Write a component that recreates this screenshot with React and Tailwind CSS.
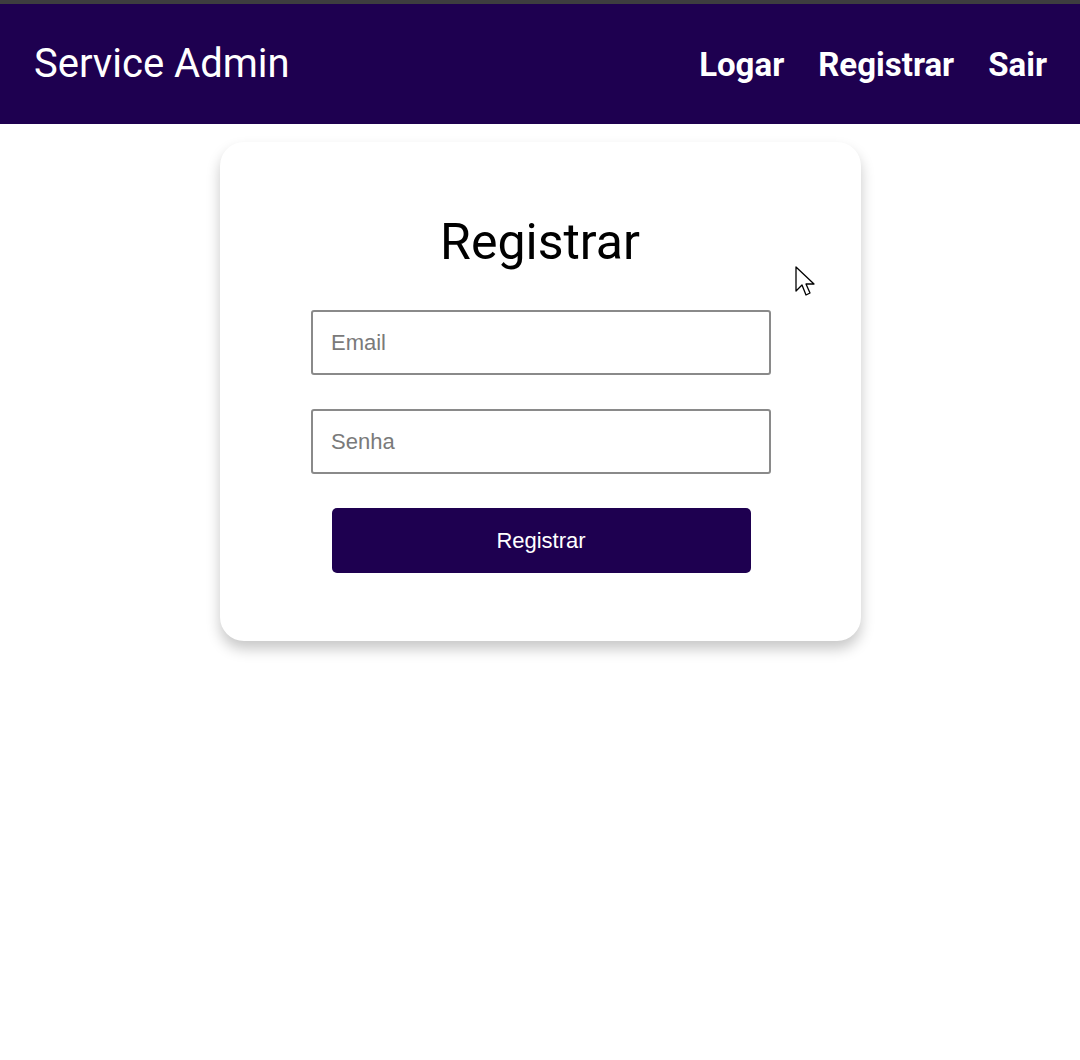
import React, { useState } from 'react';

const Navbar = () => {
  return (
    <div>
      <div className="h-[4px] bg-[#3d3d3f]" />
      <nav className="flex items-center justify-between h-[120px] bg-[#1e0050] pl-[34px] pr-[33px] font-['Roboto',sans-serif] text-white">
        <span className="text-[40px] leading-none">Service Admin</span>
        <div className="flex items-center gap-[34px] text-[33px] font-bold leading-none">
          <a href="#">Logar</a>
          <a href="#">Registrar</a>
          <a href="#">Sair</a>
        </div>
      </nav>
    </div>
  );
};

const Register = () => {
  const [email, setEmail] = useState('');
  const [senha, setSenha] = useState('');

  return (
    <div className="relative mx-auto mt-[18px] w-[641px] rounded-[24px] bg-white pt-[70px] pb-[68px] shadow-[0_8px_14px_rgba(0,0,0,0.22)]">
      <h1 className="text-center font-['Roboto',sans-serif] text-[50px] leading-[60px] text-black">Registrar</h1>
      <form className="mt-[38px] flex flex-col items-center pl-[2px] font-['Liberation_Sans',Arial,sans-serif]" onSubmit={(e) => e.preventDefault()}>
        <input
          type="email"
          placeholder="Email"
          value={email}
          onChange={(e) => setEmail(e.target.value)}
          className="h-[65px] w-[460px] rounded-[3px] border-2 border-[#8a8a8a] px-[18px] text-[22px] text-black outline-none placeholder:text-[#7a7a7a]"
        />
        <input
          type="password"
          placeholder="Senha"
          value={senha}
          onChange={(e) => setSenha(e.target.value)}
          className="mt-[34px] h-[65px] w-[460px] rounded-[3px] border-2 border-[#8a8a8a] px-[18px] text-[22px] text-black outline-none placeholder:text-[#7a7a7a]"
        />
        <button type="submit" className="mt-[34px] h-[65px] w-[419px] rounded-[5px] bg-[#1e0050] text-[22px] text-white">
          Registrar
        </button>
      </form>
      {/* mouse pointer seen in the capture */}
      <svg className="absolute left-[575px] top-[124px]" width="22" height="34" viewBox="0 0 22 34">
        <path d="M1 1 L1 25 L7 19 L11 29 L15 27 L11 18 L19 18 Z" fill="white" stroke="black" strokeWidth="1.3" strokeLinejoin="round" />
      </svg>
    </div>
  );
};

export default function App() {
  return (
    <div className="min-h-screen bg-white">
      <Navbar />
      <Register />
    </div>
  );
}
